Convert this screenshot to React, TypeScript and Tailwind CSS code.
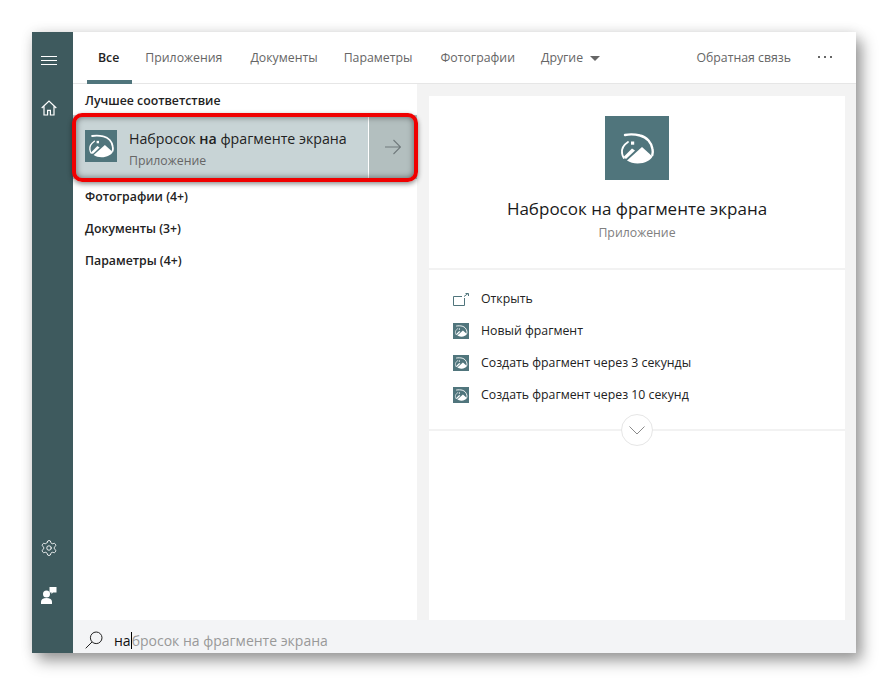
import { Settings } from "lucide-react";

const font = { fontFamily: '"Open Sans", "Noto Sans", sans-serif' };

function SnipIcon({ size }: { size: number }) {
  const box = size > 40 ? "0 0 64 64" : "10.5 11 42.7 42.7";
  return (
    <div className="flex shrink-0 items-center justify-center bg-[#50757c]" style={{ width: size, height: size }}>
      <svg viewBox={box} style={{ width: size, height: size }}>
        <path d="M20 19 C25 18 31 18.500 35 19.500 C42 21 46.500 27 47.500 33 C48 35.500 47.800 37.500 47.300 39" fill="none" stroke="#fff" strokeWidth="2.400" strokeLinecap="round" />
        <path d="M23 26 C18.500 29 16.500 33 17 37 C17.300 39 17.800 40.500 18.800 42" fill="none" stroke="#fff" strokeWidth="1.800" strokeLinecap="round" />
        <path d="M22 44.500 L37 31 L47.500 40.500 C46 44 40 47.500 32.500 47.500 C28.500 47.500 25 46.500 22 44.500 Z" fill="#fff" />
        <path d="M18.500 41 L27 32.500 L30 34.500 L21 43 Z" fill="#fff" />
        <rect x="26" y="25.500" width="3.200" height="3.200" fill="#fff" />
      </svg>
    </div>
  );
}

function Tab({ label, active }: { label: string; active?: boolean }) {
  return (
    <div className="relative flex h-full items-center">
      <span className={active ? "font-semibold text-[#222]" : "text-[#666]"}>{label}</span>
    </div>
  );
}

export default function App() {
  return (
    <div className="h-[685px] w-[888px] overflow-hidden bg-white pl-8 pt-8 text-[12.3px]" style={font}>
      <div className="flex h-[621px] w-[824px] shadow-[6px_8px_14px_rgba(0,0,0,0.38),0_0_12px_rgba(0,0,0,0.1)]">
        {/* Sidebar */}
        <div className="flex w-[41px] shrink-0 flex-col items-start bg-[#3e5a5e] pl-[9px] text-white">
          <svg className="mt-[24px]" width="16" height="10" viewBox="0 0 16 10" stroke="#fff" strokeWidth="1" fill="none">
            <path d="M0 .5H16M0 4.500H16M0 8.500H16" />
          </svg>
          <svg className="mt-[34px]" width="16" height="16" viewBox="0 0 16 16" fill="none" stroke="#fff" strokeWidth="1.200">
            <path d="M.7 8 8 1l7.300 7M3 6.200V15h3.600v-4.600h2.800V15H13V6.200" />
          </svg>
          <Settings className="ml-[-1px] mt-auto" size={18} color="#fff" strokeWidth={1.2} />
          <svg className="mb-[49px] mt-[30px]" width="16" height="17" viewBox="0 0 16 17" fill="#fff">
            <circle cx="5.500" cy="7" r="3.500" />
            <path d="M0 17v-2.200C0 12.500 2 11 5.500 11S11 12.500 11 14.800V17Z" />
            <path d="M8.500 0h7v5.500H12L10.500 7V5.500H8.500Z" />
          </svg>
        </div>

        {/* Main */}
        <div className="flex min-w-0 flex-1 flex-col">
          {/* Tabs */}
          <div className="flex h-[52px] shrink-0 items-center border-b border-[#e6e6e6] bg-white pl-[25px] pr-[24px] pt-[1px]">
            <div className="relative flex h-full items-center">
              <Tab label="Все" active />
              <div className="absolute bottom-[-1px] left-[-11px] h-[4px] w-[45px] bg-[#50757c]" />
            </div>
            <div className="ml-[26px] h-full"><Tab label="Приложения" /></div>
            <div className="ml-[28px] h-full"><Tab label="Документы" /></div>
            <div className="ml-[26px] h-full"><Tab label="Параметры" /></div>
            <div className="ml-[28px] h-full"><Tab label="Фотографии" /></div>
            <div className="ml-[26px] flex h-full items-center gap-[7px] text-[#666]">
              <span>Другие</span>
              <svg width="10" height="5" viewBox="0 0 10 5" fill="#666"><path d="M0 0h10L5 5Z" /></svg>
            </div>
            <span className="ml-auto text-[#666]">Обратная связь</span>
            <div className="ml-[27px] mb-[2px] flex gap-[4px]">
              <i className="h-[2px] w-[2px] bg-[#666]" />
              <i className="h-[2px] w-[2px] bg-[#666]" />
              <i className="h-[2px] w-[2px] bg-[#666]" />
            </div>
          </div>

          {/* Body */}
          <div className="flex min-h-0 flex-1 bg-[#f3f3f3]">
            {/* Results */}
            <div className="relative w-[344px] shrink-0 bg-white text-[#222]">
              <div className="flex h-[31px] items-center pl-[12px] pt-[3px] font-semibold">Лучшее соответствие</div>
              <div className="flex h-[64px] bg-[#c8d4d6]">
                <div className="flex min-w-0 flex-1 items-center pl-[12px]">
                  <div className="mb-[2px]"><SnipIcon size={32} /></div>
                  <div className="ml-[12px] mt-[4px]">
                    <div className="text-[14.2px] leading-[20px] text-[#222]">
                      Набросок <span className="font-semibold">на</span> фрагменте экрана
                    </div>
                    <div className="mt-[3px] leading-[17px] text-[#666]">Приложение</div>
                  </div>
                </div>
                <div className="flex w-[49px] items-center justify-center border-l border-white bg-[#b3bfbf]">
                  <svg width="16" height="16" viewBox="0 0 16 16" fill="none" stroke="#707a7c" strokeWidth="1.100">
                    <path d="M0 8h15.500M8.500 1l7 7-7 7" />
                  </svg>
                </div>
              </div>
              <div className="pointer-events-none absolute left-[-1px] top-[29px] h-[69px] w-[346px] rounded-[10px] border-[4px] border-[#f00000] shadow-[0_2px_5px_rgba(0,0,0,0.45),inset_0_0_6px_rgba(0,0,0,0.5)]" />
              <div className="pl-[12px] pt-[2px] font-semibold">
                <div className="flex h-[32px] items-center">Фотографии (4+)</div>
                <div className="flex h-[32px] items-center">Документы (3+)</div>
                <div className="flex h-[32px] items-center">Параметры (4+)</div>
              </div>
            </div>

            {/* Details */}
            <div className="ml-[12px] mt-[12px] w-[416px] bg-white">
              <div className="flex h-[174px] flex-col items-center border-b-2 border-[#f2f2f2] pt-[20px]">
                <SnipIcon size={64} />
                <div className="mt-[17px] text-[17px] leading-[24px] text-[#1a1a1a]">Набросок на фрагменте экрана</div>
                <div className="mt-[3px] leading-[17px] text-[#808080]">Приложение</div>
              </div>
              <div className="relative h-[161px] border-b-2 border-[#f2f2f2] pl-[24px] pt-[13px] text-[#222]">
                <div className="flex h-[32px] items-center gap-[12px]">
                  <svg width="16" height="13" viewBox="0 0 16 13" fill="none" stroke="#50757c" strokeWidth="1">
                    <path d="M11.500 5v7.500H.5V3.500H9M11 3.500 15 .5M12.500.5H15.500V3" />
                  </svg>
                  <span>Открыть</span>
                </div>
                <div className="flex h-[32px] items-center gap-[12px]">
                  <SnipIcon size={16} />
                  <span>Новый фрагмент</span>
                </div>
                <div className="flex h-[32px] items-center gap-[12px]">
                  <SnipIcon size={16} />
                  <span>Создать фрагмент через 3 секунды</span>
                </div>
                <div className="flex h-[32px] items-center gap-[12px]">
                  <SnipIcon size={16} />
                  <span>Создать фрагмент через 10 секунд</span>
                </div>
                <div className="absolute bottom-[-17px] left-[192px] flex h-[32px] w-[32px] items-center justify-center rounded-full border border-[#e6e6e6] bg-white">
                  <svg width="16" height="9" viewBox="0 0 16 9" fill="none" stroke="#8a8a8a" strokeWidth="1">
                    <path d="M.5.5 8 8 15.500.5" />
                  </svg>
                </div>
              </div>
            </div>
          </div>

          {/* Search */}
          <div className="flex h-[33px] shrink-0 items-center bg-[#f3f4f6] pl-[12px] pt-[7px] text-[14px]">
            <svg width="18" height="18" viewBox="0 0 18 18" fill="none" stroke="#222" strokeWidth="1">
              <circle cx="11.200" cy="6.800" r="5.800" />
              <path d="M7 11 .7 17.300" />
            </svg>
            <span className="ml-[11px] text-[#111]">на</span>
            <span className="h-[17px] w-[1px] bg-black" />
            <span className="text-[#999]">бросок на фрагменте экрана</span>
          </div>
        </div>
      </div>
    </div>
  );
}
